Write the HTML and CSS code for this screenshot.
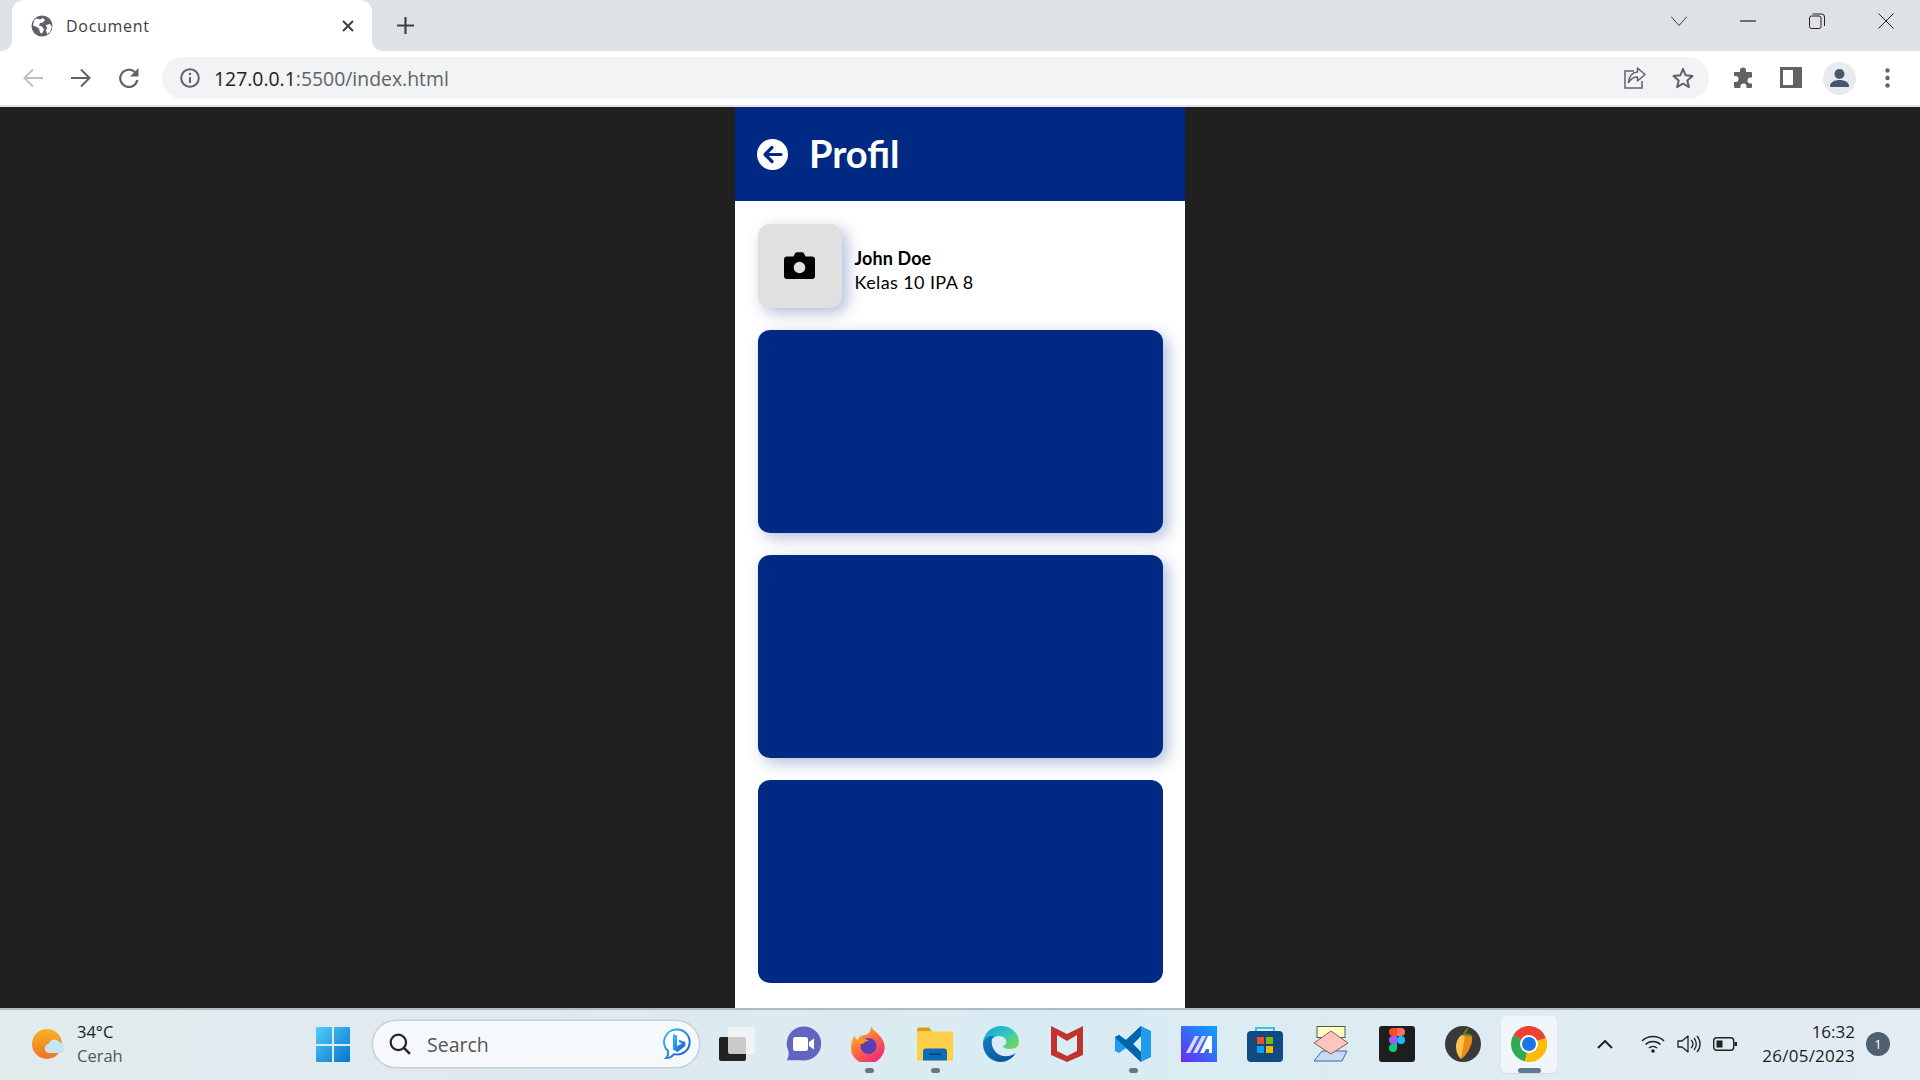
FILE: index.html
```html
<!DOCTYPE html>
<html lang="id">
<head>
<meta charset="utf-8">
<title>Document</title>
<link rel="stylesheet" href="styles.css">
</head>
<body>
<div class="screen">
  <div class="tabstrip">
    <div class="tab">
      <svg class="globe" viewBox="0 0 22 22"><circle cx="11" cy="11" r="10.5" fill="#5f6368"/><path d="M5 3.500l4 1 3-1.500 2 2-2 2.500-3 .5-1 2.500 3 1 2 3-2 4-2-1-1-4-3-2-3-1 1-5zM15 10l4-1 2 3-2 5-3 2-1-4 1-2z" fill="#fff"/></svg>
      <span class="tab-title">Document</span>
      <svg class="tab-close" viewBox="0 0 12 12"><path d="M1 1l10 10M11 1L1 11" stroke="#3c4043" stroke-width="2" fill="none"/></svg>
    </div>
    <svg class="newtab" viewBox="0 0 17 17"><path d="M8.500 0v17M0 8.500h17" stroke="#3c4043" stroke-width="2.200" fill="none"/></svg>
    <div class="winctl">
      <span class="winbtn"><svg class="wi" viewBox="0 0 16 16"><path d="M0 3.500l8 9 8-9" stroke="#3c4043" fill="none"/></svg></span>
      <span class="winbtn"><svg class="wi" viewBox="0 0 16 16"><path d="M0 8h16" stroke="#222" stroke-width="1.200" fill="none"/></svg></span>
      <span class="winbtn"><svg class="wi" viewBox="0 0 16 16"><rect x=".5" y="3" width="11.500" height="12.500" rx="2" stroke="#222" fill="none"/><path d="M3.500 1h9a3 3 0 0 1 3 3v9" stroke="#222" fill="none"/></svg></span>
      <span class="winbtn"><svg class="wi" viewBox="0 0 16 16"><path d="M.5.5l15 15M15.500.5l-15 15" stroke="#222" fill="none"/></svg></span>
    </div>
  </div>

  <div class="toolbar">
    <span class="tbtn"><svg class="ti" viewBox="0 0 20 20"><path d="M20 10H2M10 1.500L1.500 10l8.500 8.500" stroke="#bdc1c6" stroke-width="2" fill="none"/></svg></span>
    <span class="tbtn"><svg class="ti" viewBox="0 0 20 20"><path d="M0 10h18M10 1.500l8.500 8.500-8.500 8.500" stroke="#5f6368" stroke-width="2" fill="none"/></svg></span>
    <span class="tbtn"><svg class="ti" viewBox="0 0 20 20"><path d="M18.300 12A8.600 8.600 0 1 1 16 4.300" stroke="#5f6368" stroke-width="2.200" fill="none"/><path d="M19.500 0v8.500H11z" fill="#5f6368"/></svg></span>
    <div class="omnibox">
      <svg class="ti info" viewBox="0 0 20 20"><circle cx="10" cy="10" r="8.800" stroke="#5f6368" stroke-width="2" fill="none"/><path d="M10 9v6" stroke="#5f6368" stroke-width="2"/><circle cx="10" cy="6" r="1.200" fill="#5f6368"/></svg>
      <span class="url"><span class="url-host">127.0.0.1</span>:5500/index.html</span>
      <svg class="omni-ic" viewBox="0 0 22 22"><path d="M10 4H1v17h17v-7" stroke="#5f6368" stroke-width="1.500" fill="none"/><path d="M13.500 1v4C8 5.500 5 9 4.500 15.500 7 11.500 9.500 10 13.500 10v4L21 7.500z" stroke="#5f6368" stroke-width="1.500" fill="none" stroke-linejoin="round"/></svg>
      <svg class="omni-ic" viewBox="0 0 22 22"><path d="M11 2l2.700 6.300 6.800.6-5.200 4.500 1.600 6.700L11 16.500l-5.900 3.600 1.600-6.700L1.500 8.900l6.800-.6z" stroke="#5f6368" stroke-width="2" fill="none" stroke-linejoin="round"/></svg>
    </div>
    <span class="tbtn first-right"><svg class="ext" viewBox="0 0 22 22"><path d="M8 3.500a3 3 0 0 1 6 0V5h5a1 1 0 0 1 1 1v4.500h-1.500a3 3 0 0 0 0 6H20V20a1 1 0 0 1-1 1h-4.500v-1.500a3 3 0 0 0-6 0V21H3a1 1 0 0 1-1-1v-5h1.500a3 3 0 0 0 0-6H2V6a1 1 0 0 1 1-1h5z" fill="#5f6368"/></svg></span>
    <span class="tbtn"><svg class="ext" viewBox="0 0 22 22"><path fill-rule="evenodd" d="M0 0h22v21H0zM3 3v15h10V3z" fill="#5f6368"/></svg></span>
    <span class="tbtn"><svg class="acct" viewBox="0 0 33 33"><circle cx="16.500" cy="16.500" r="16.500" fill="#e8eaed"/><circle cx="16.500" cy="12" r="5" fill="#49566f"/><path d="M7 24c0-4 5-6 9.500-6s9.500 2 9.500 6v1H7z" fill="#49566f"/></svg></span>
    <span class="tbtn"><svg class="dots" viewBox="0 0 5 20"><circle cx="2.500" cy="2.500" r="2.200" fill="#5f6368"/><circle cx="2.500" cy="10" r="2.200" fill="#5f6368"/><circle cx="2.500" cy="17.500" r="2.200" fill="#5f6368"/></svg></span>
  </div>

  <main class="viewport">
    <div class="phone">
      <header class="head">
        <svg class="back" viewBox="0 0 31 31"><circle cx="15.500" cy="15.500" r="15.500" fill="#fff"/><path d="M24 15.500H9M15 8.500l-7 7 7 7" stroke="#002984" stroke-width="3.200" fill="none" stroke-linecap="round" stroke-linejoin="round"/></svg>
        <h1 class="head-title">Profil</h1>
      </header>
      <section class="content">
        <div class="profile">
          <div class="avatar">
            <svg class="camera" viewBox="0 0 31 27"><path d="M3 4.500h6.500L11 1.500A2.500 2.500 0 0 1 13 .3h5a2.500 2.500 0 0 1 2 1.200l1.500 3H28a3 3 0 0 1 3 3V24a3 3 0 0 1-3 3H3a3 3 0 0 1-3-3V7.500a3 3 0 0 1 3-3z" fill="#000"/><circle cx="15.500" cy="15.500" r="5.800" fill="#e0e0e0"/></svg>
          </div>
          <div class="who">
            <div class="who-name">John Doe</div>
            <div class="who-class">Kelas 10 IPA 8</div>
          </div>
        </div>
        <div class="card card-shadow"></div>
        <div class="card card-shadow"></div>
        <div class="card"></div>
      </section>
    </div>
  </main>

  <footer class="taskbar">
    <div class="weather">
      <svg class="weather-ic" viewBox="0 0 33 30"><defs><linearGradient id="s" x1="0" y1="0" x2="0" y2="1"><stop offset="0" stop-color="#f6b322"/><stop offset="1" stop-color="#ee7426"/></linearGradient></defs><circle cx="15" cy="15" r="15" fill="url(#s)"/><path d="M17 24a4.500 4.500 0 0 1-.5-8.900 6 6 0 0 1 11-1.500 5.200 5.200 0 0 1 .5 10.400z" fill="#c4e4f8"/></svg>
      <div class="weather-txt"><div class="w1">34°C</div><div class="w2">Cerah</div></div>
    </div>
    <svg class="winlogo" viewBox="0 0 34 35"><defs><linearGradient id="w" x1="0" y1="0" x2="1" y2="1"><stop offset="0" stop-color="#52cdf8"/><stop offset="1" stop-color="#0673cf"/></linearGradient></defs><path d="M0 1a1 1 0 0 1 1-1h15v17H0zM18 0h15a1 1 0 0 1 1 1v16H18zM0 19h16v16H1a1 1 0 0 1-1-1zM18 19h16v15a1 1 0 0 1-1 1H18z" fill="url(#w)"/></svg>
    <div class="search">
      <svg class="search-ic" viewBox="0 0 20 20"><circle cx="8.500" cy="8.500" r="7" stroke="#222" stroke-width="2" fill="none"/><path d="M13.500 13.500l5.500 5.500" stroke="#222" stroke-width="2.200"/></svg>
      <span class="search-txt">Search</span>
      <svg class="bing" viewBox="0 0 28 32"><defs><linearGradient id="b" x1="0" y1="0" x2="1" y2="1"><stop offset="0" stop-color="#35c1f1"/><stop offset="1" stop-color="#1b4fd8"/></linearGradient></defs><path d="M14 1.500a12.500 12.500 0 1 1-3 24.600c-2 2.500-5 4-8 4 2-2 2.500-4.500 2-7A12.500 12.500 0 0 1 14 1.500z" fill="#fff" stroke="url(#b)" stroke-width="2"/><path d="M10 6l4 1.500V18l5-2.500-2.500-1-1.200-3 7 2.500v4L14.500 24 10 21.500z" fill="url(#b)"/></svg>
    </div>
    <div class="apps">
      <span class="app"><svg class="aic" viewBox="0 0 36 34"><rect x="0" y="10" width="27" height="24" rx="2" fill="#222"/><rect x="9" y="0" width="27" height="27" rx="2" fill="#f5f5f5" opacity=".8"/></svg></span>
      <span class="app"><svg class="aic" viewBox="0 0 36 36"><path d="M19 .5a17 17 0 1 1-3 33.700H1.500c2-2 2.500-6 2-9A17 17 0 0 1 19 .5z" fill="#6264c4"/><rect x="8" y="11" width="15" height="14" rx="2.500" fill="#fff"/><path d="M24 16l5-3.500v11L24 20z" fill="#fff"/></svg></span>
      <span class="app"><svg class="aic" viewBox="0 0 36 36"><defs><linearGradient id="f" x1="0" y1="0" x2=".7" y2="1"><stop offset="0" stop-color="#ffd52e"/><stop offset=".5" stop-color="#ff7139"/><stop offset="1" stop-color="#ee2a7b"/></linearGradient></defs><path d="M20 0c1 4 5 5 8 9 6 6 7 13 4 19a17 17 0 0 1-31 0C-1 22 0 14 4 9c0 3 1 4 3 5 1-4 4-5 7-5 4-1 6-4 6-9z" fill="url(#f)"/><circle cx="17.500" cy="20" r="8" fill="#5b3db8"/><path d="M6 15c4-3 8-3 12 0-3 0-5 1-6 3-3 0-5-1-6-3z" fill="#ff9a1f"/></svg><span class="run"></span></span>
      <span class="app"><svg class="aic" viewBox="0 0 36 33"><path d="M0 2a2 2 0 0 1 2-2h10l3 4h-15z" fill="#d9a100"/><rect x="0" y="4" width="36" height="29" rx="1" fill="#ffcf48"/><path d="M6 33V24a3 3 0 0 1 3-3h18a3 3 0 0 1 3 3v9z" fill="#0b6cb8"/><rect x="12" y="26" width="12" height="1.500" fill="#063f73"/></svg><span class="run"></span></span>
      <span class="app"><svg class="aic" viewBox="0 0 36 36"><defs><linearGradient id="e1" x1="0" y1="0" x2="1" y2=".7"><stop offset="0" stop-color="#1a9ed8"/><stop offset=".6" stop-color="#33c7c0"/><stop offset="1" stop-color="#6fd75a"/></linearGradient><linearGradient id="e2" x1="0" y1="0" x2="1" y2="1"><stop offset="0" stop-color="#0f7ec9"/><stop offset="1" stop-color="#0b4e96"/></linearGradient></defs><path d="M18 0c11 0 18 8 18 16 0 5-4 7-9 7-4 0-7-1-7-3 3-1 4-3 3-6-2-4-7-5-11-3C8 13 3 18 0 18 0 8 8 0 18 0z" fill="url(#e1)"/><path d="M0 18c0-4 5-9 11-8-4 3-3 13 4 18 6 4 14 2 18-1-4 6-10 9-15 9C8 36 0 28 0 18z" fill="url(#e2)"/></svg></span>
      <span class="app"><svg class="aic mcafee" viewBox="0 0 32 36"><path fill-rule="evenodd" d="M0 0l16 8 16-8v29l-16 7-16-7zM6 9v16l10 5 10-5V9l-10 6z" fill="#c1332e"/></svg></span>
      <span class="app"><svg class="aic" viewBox="0 0 36 36"><path d="M26 0l10 5v26l-10 5-15-14-7 5-4-2v-14l4-2 7 5zm0 10l-8 8 8 8z" fill="#1f9cf0"/><path d="M26 0L11 14 4 9 0 11l7 7 19 18 0-10-8-8 8-8z" fill="#0065a9"/></svg><span class="run"></span></span>
      <span class="app"><svg class="aic" viewBox="0 0 36 36"><defs><linearGradient id="g" x1="0" y1="1" x2="1" y2="0"><stop offset="0" stop-color="#6a2bf0"/><stop offset="1" stop-color="#0aa5ff"/></linearGradient></defs><rect width="36" height="36" fill="url(#g)"/><path d="M5 27L14 10h4L9 27zM12 27l9-17h4l-9 17z" fill="#dcd8fa"/><path d="M19 27l8-17h4v17h-3v-4h-3l-2 4z" fill="#fff"/></svg></span>
      <span class="app"><svg class="aic" viewBox="0 0 36 36"><path d="M9 6V2h18v4" stroke="#35c5f0" stroke-width="2" fill="none"/><rect y="5" width="36" height="31" rx="4" fill="#114a80"/><rect x="10" y="11" width="7" height="7" fill="#f25022"/><rect x="19" y="11" width="7" height="7" fill="#7fba00"/><rect x="10" y="20" width="7" height="7" fill="#00a4ef"/><rect x="19" y="20" width="7" height="7" fill="#ffb900"/></svg></span>
      <span class="app"><svg class="aic" viewBox="0 0 36 36"><rect x="4" y=".5" width="28" height="11" fill="#ffffc0" stroke="#555"/><path d="M9 25h25l-5 10H1z" fill="#c6dcf5" stroke="#44669a"/><path d="M18 5l17 12-17 11L1 17z" fill="#ffc4c0" stroke="#8b5552"/></svg></span>
      <span class="app"><svg class="aic" viewBox="0 0 36 36"><rect width="36" height="36" rx="3" fill="#1e1e1e"/><path d="M10 6a4 4 0 0 1 4-4h4v8h-4a4 4 0 0 1-4-4z" fill="#f24e1e"/><path d="M18 2h4a4 4 0 0 1 0 8h-4z" fill="#ff7262"/><path d="M10 14a4 4 0 0 1 4-4h4v8h-4a4 4 0 0 1-4-4z" fill="#a259ff"/><circle cx="22" cy="14" r="4" fill="#1abcfe"/><path d="M10 22a4 4 0 0 1 4-4h4v4a4 4 0 0 1-8 0z" fill="#0acf83"/></svg></span>
      <span class="app"><svg class="aic" viewBox="0 0 36 36"><circle cx="18" cy="18" r="18" fill="#3a3a3a"/><path d="M20 8c5-1 8 2 7 7-1 7-6 15-11 18-2-1-3-3-3-6 0-4 0-8 1-12 1-4 3-6 6-7z" fill="#f08a15"/><path d="M17 9c3 0 3 3 2 7-1 6-2 11-3 16-3-2-5-6-5-11 0-6 3-11 6-12z" fill="#fcc250"/><path d="M18 9c0-3 3-6 6-8-1 3-2 4-4 7 4-1 7 0 8 3-4-1-7-1-10-2z" fill="#5a8b2a"/></svg></span>
      <span class="app app-active"><svg class="aic" viewBox="0 0 36 36"><path d="M18 18L2.400 9A18 18 0 0 1 35 12z" fill="#ea4335"/><path d="M18 18L2.400 9A18 18 0 0 0 14 35.500z" fill="#34a853"/><path d="M18 18L35 12A18 18 0 0 1 14 35.500z" fill="#fbbc04"/><circle cx="18" cy="18" r="9" fill="#fff"/><circle cx="18" cy="18" r="7" fill="#1a73e8"/></svg><span class="run run-wide"></span></span>
    </div>
    <div class="tray">
      <svg class="tr-chev" viewBox="0 0 16 9"><path d="M1 8l7-7 7 7" stroke="#222" stroke-width="2" fill="none"/></svg>
      <svg class="tr-ic" viewBox="0 0 24 18"><path d="M1 6a16 16 0 0 1 22 0M4.500 9.500a11 11 0 0 1 15 0M8 13a6 6 0 0 1 8 0" stroke="#222" stroke-width="1.500" fill="none"/><circle cx="12" cy="16" r="1.800" fill="#222"/></svg>
      <svg class="tr-ic" viewBox="0 0 24 18"><path d="M1 6h4l6-5v16l-6-5H1z" stroke="#222" stroke-width="1.300" fill="none" stroke-linejoin="round"/><path d="M14 5a5 5 0 0 1 0 8M17 3a9 9 0 0 1 0 12M20 1a12 12 0 0 1 0 16" stroke="#222" stroke-width="1.300" fill="none"/></svg>
      <svg class="tr-ic" viewBox="0 0 24 18"><rect x=".7" y="2.700" width="20" height="12.600" rx="3" stroke="#222" stroke-width="1.400" fill="none"/><rect x="3.500" y="5.500" width="6" height="7" fill="#222"/><rect x="21.500" y="7" width="2.500" height="4" fill="#222"/></svg>
    </div>
    <div class="clock"><div>16:32</div><div class="clock-date">26/05/2023</div></div>
    <div class="badge">1</div>
  </footer>
</div>
</body>
</html>
```

FILE: styles.css
```css
* { box-sizing: border-box; }
html, body { margin: 0; padding: 0; height: 100%; overflow: hidden; }
body { font-family: "Open Sans", "Noto Sans", sans-serif; }
.screen { width: 1920px; height: 1080px; display: flex; flex-direction: column; }

/* tab strip */
.tabstrip { height: 51px; flex: none; background: #dee1e6; display: flex; align-items: center; padding-left: 12px; }
.tab { width: 360px; height: 51px; background: #fff; border-radius: 12px 12px 0 0; display: flex; align-items: center; padding-left: 19px; padding-right: 18px; position: relative; }
.tab::before, .tab::after { content: ""; position: absolute; bottom: 0; width: 10px; height: 10px; }
.tab::before { left: -10px; background: radial-gradient(circle at 0 0, #dee1e6 9.500px, #fff 10px); }
.tab::after { right: -10px; background: radial-gradient(circle at 100% 0, #dee1e6 9.500px, #fff 10px); }
.globe { width: 22px; height: 22px; flex: none; }
.tab-title { margin-left: 13px; font-size: 16px; letter-spacing: .7px; color: #3c4043; flex: 1; }
.tab-close { width: 12px; height: 12px; flex: none; }
.newtab { width: 17px; height: 17px; margin-left: 25px; flex: none; }
.winctl { margin-left: auto; display: flex; margin-top: -10px; }
.winbtn { width: 69px; display: flex; justify-content: center; }
.wi { width: 16px; height: 16px; }

/* toolbar */
.toolbar { height: 56px; flex: none; background: #fff; border-bottom: 2px solid #e3e3e3; display: flex; align-items: center; padding-left: 9px; padding-right: 9px; }
.tbtn { width: 48px; height: 42px; display: flex; align-items: center; justify-content: center; flex: none; }
.first-right { margin-left: 10px; }
.ti { width: 20px; height: 20px; flex: none; }
.omnibox { width: 1547px; height: 42px; margin-left: 9px; flex: none; background: #f1f3f4; border-radius: 21px; display: flex; align-items: center; padding: 0 15px 0 18px; }
.url { margin-left: 14px; font-size: 19.400px; color: #5f6368; flex: 1; }
.url-host { color: #202124; }
.omni-ic { width: 22px; height: 22px; flex: none; margin-left: 26px; }
.ext { width: 22px; height: 22px; }
.acct { width: 33px; height: 33px; }
.dots { width: 5px; height: 20px; }

/* page */
.viewport { flex: 1; min-height: 0; background: #202020; display: flex; justify-content: center; }
.phone { width: 450px; background: #fff; display: flex; flex-direction: column; }
.head { height: 94px; flex: none; background: #002984; display: flex; align-items: center; padding-left: 22px; gap: 21px; }
.back { width: 31px; height: 31px; flex: none; }
.head-title { margin: -3px 0 0; font-family: Lato, sans-serif; font-weight: 700; font-size: 38px; color: #fff; }
.content { flex: 1; padding: 23px 22.500px; display: flex; flex-direction: column; gap: 22px; }
.profile { display: flex; align-items: center; gap: 13px; height: 84px; flex: none; }
.avatar { width: 84px; height: 84px; flex: none; background: #e0e0e0; border-radius: 12px; box-shadow: 5px 5px 15px rgba(0, 41, 132, .3); display: flex; align-items: center; justify-content: center; }
.camera { width: 31px; height: 27px; margin-top: -1px; }
.who { font-family: Lato, sans-serif; font-size: 18px; line-height: 24px; color: #000; margin-top: 8px; }
.who-name { font-weight: 700; letter-spacing: .1px; }
.who-class { letter-spacing: .4px; }
.card { height: 203px; flex: none; background: #002984; border-radius: 12px; }
.card-shadow { box-shadow: 5px 5px 15px rgba(0, 41, 132, .3); }

/* taskbar */
.taskbar { height: 72px; flex: none; border-top: 2px solid #b3bbbf; background: linear-gradient(90deg, #e2ebec 0%, #dfe9f1 30%, #d9ecf3 55%, #dfebf2 80%, #e3ebf3 100%); display: flex; align-items: center; padding-left: 32px; padding-bottom: 2px; }
.weather { display: flex; align-items: center; width: 284px; flex: none; gap: 12px; }
.weather-ic { width: 33px; height: 30px; flex: none; }
.weather-txt { margin-top: -1px; }
.w1 { font-size: 16.500px; line-height: 24px; color: #1c1c1c; }
.w2 { font-size: 16.500px; line-height: 24px; color: #555; }
.winlogo { width: 34px; height: 35px; flex: none; }
.search { width: 326px; height: 46px; margin-left: 23px; flex: none; border-radius: 23px; background: #f6f9fc; box-shadow: 0 0 0 1.500px #c8d0d8; display: flex; align-items: center; padding-left: 16px; padding-right: 7px; }
.search-ic { width: 22px; height: 22px; flex: none; }
.search-txt { margin-left: 16px; font-size: 19.500px; color: #555; flex: 1; }
.bing { width: 30px; height: 32px; flex: none; }
.apps { display: flex; margin-left: 5px; flex: none; }
.app { width: 66px; height: 68px; display: flex; align-items: center; justify-content: center; position: relative; }
.aic { width: 36px; height: 36px; }
.mcafee { width: 32px; }
.app-active::before { content: ""; position: absolute; left: 5px; right: 5px; top: 6px; bottom: 5px; background: #f0f6f9; border-radius: 5px; box-shadow: 0 1px 1px #cfd8de; }
.app-active .aic { position: relative; }
.run { position: absolute; left: 50%; bottom: 5px; width: 9px; height: 5px; margin-left: -4.500px; border-radius: 3px; background: #6d767b; }
.run-wide { width: 23px; margin-left: -11.500px; background: #5f7a8a; }
.tray { display: flex; align-items: center; margin-left: 35px; flex: none; }
.tr-chev { width: 16px; height: 9px; margin-right: 28px; flex: none; }
.tr-ic { width: 24px; height: 18px; margin-right: 12px; flex: none; }
.clock { margin-left: auto; margin-right: 11px; text-align: right; font-size: 17px; line-height: 24px; color: #1c1c1c; margin-top: -1px; }
.clock-date { letter-spacing: .25px; }
.badge { width: 24px; height: 24px; margin-right: 30px; flex: none; border-radius: 50%; background: #4f6070; color: #fff; font-size: 13px; display: flex; align-items: center; justify-content: center; }
```
